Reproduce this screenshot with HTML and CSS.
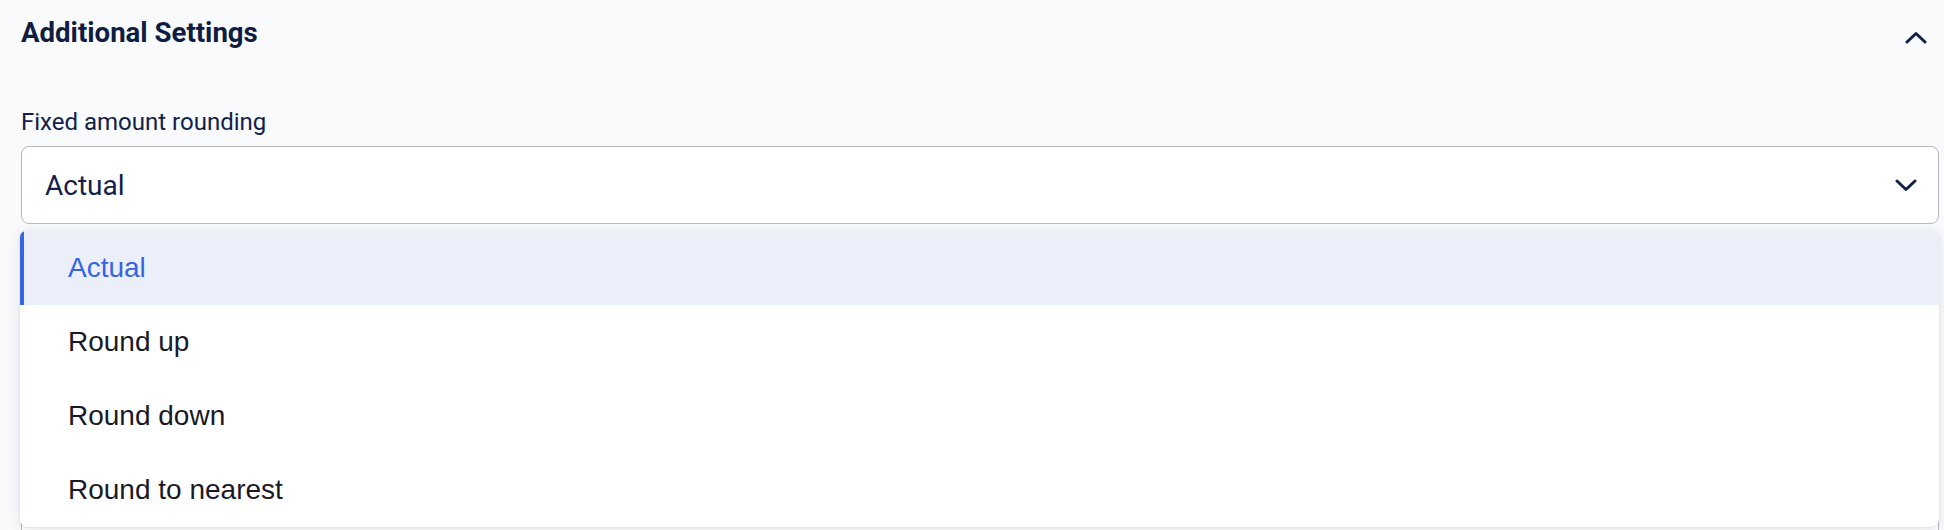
FILE: index.html
```html
<!DOCTYPE html>
<html lang="en">
<head>
<meta charset="utf-8">
<title>Additional Settings</title>
<link rel="stylesheet" href="styles.css">
</head>
<body>
<section class="panel">
  <header class="panel-head">
    <h2 class="panel-title">Additional Settings</h2>
    <svg class="chev-up" width="22" height="13" viewBox="0 0 22 13" aria-hidden="true">
      <polyline points="2,11 11,2.5 20,11" fill="none" stroke="#13214a" stroke-width="3" stroke-linecap="round" stroke-linejoin="round"/>
    </svg>
  </header>
  <div class="field">
    <label class="field-label">Fixed amount rounding</label>
    <div class="select">
      <span class="select-value">Actual</span>
      <svg class="chev-down" width="22" height="13" viewBox="0 0 22 13" aria-hidden="true">
        <polyline points="2,2 11,10.5 20,2" fill="none" stroke="#13214a" stroke-width="3" stroke-linecap="round" stroke-linejoin="round"/>
      </svg>
    </div>
    <ul class="menu">
      <li class="option selected">Actual</li>
      <li class="option">Round up</li>
      <li class="option">Round down</li>
      <li class="option">Round to nearest</li>
    </ul>
  </div>
  <div class="next-box"></div>
</section>
</body>
</html>
```
FILE: styles.css
```css
html, body {
  margin: 0;
  padding: 0;
  background: #f9fafc;
  overflow: hidden;
}
.panel {
  padding: 18px 5px 0 21px;
  font-family: Roboto, "Liberation Sans", sans-serif;
  color: #13214a;
}
.panel-head {
  display: flex;
  justify-content: space-between;
  align-items: flex-start;
  height: 30px;
}
.panel-title {
  margin: 0;
  font-size: 27.6px;
  line-height: 30px;
  font-weight: 700;
  color: #0f1d42;
}
.chev-up {
  margin-top: 13px;
  margin-right: 12px;
}
.field {
  position: relative;
  margin-top: 61px;
}
.field-label {
  display: block;
  font-size: 24px;
  line-height: 26px;
  font-weight: 400;
  color: #13214a;
}
.select {
  margin-top: 11px;
  box-sizing: border-box;
  height: 78px;
  border: 1.5px solid #b7bac6;
  border-radius: 8px;
  background: #fff;
  display: flex;
  align-items: center;
  justify-content: space-between;
  padding: 0 21px 0 23px;
}
.select-value {
  font-size: 28px;
  color: #13214a;
}
.chev-down {
  margin-top: 1px;
}
.menu {
  position: absolute;
  top: 122px;
  left: -1px;
  right: 0;
  margin: 0;
  padding: 0;
  list-style: none;
  background: #fff;
  border-radius: 6px 6px 8px 8px;
  box-shadow: 0 2px 14px rgba(20, 30, 60, 0.10), 0 1px 3px rgba(20, 30, 60, 0.08);
  overflow: hidden;
  z-index: 2;
}
.option {
  height: 74px;
  display: flex;
  align-items: center;
  padding-left: 48px;
  font-family: "Liberation Sans", Arial, sans-serif;
  font-size: 28px;
  color: #191a26;
}
.option.selected {
  background: #ebeffa;
  color: #3565e2;
  box-shadow: inset 4px 0 0 #3565e2;
}
.next-box {
  margin-top: 270px;
  height: 80px;
  border: 1.5px solid #b7bac6;
  border-radius: 8px;
  background: #fff;
}
```
